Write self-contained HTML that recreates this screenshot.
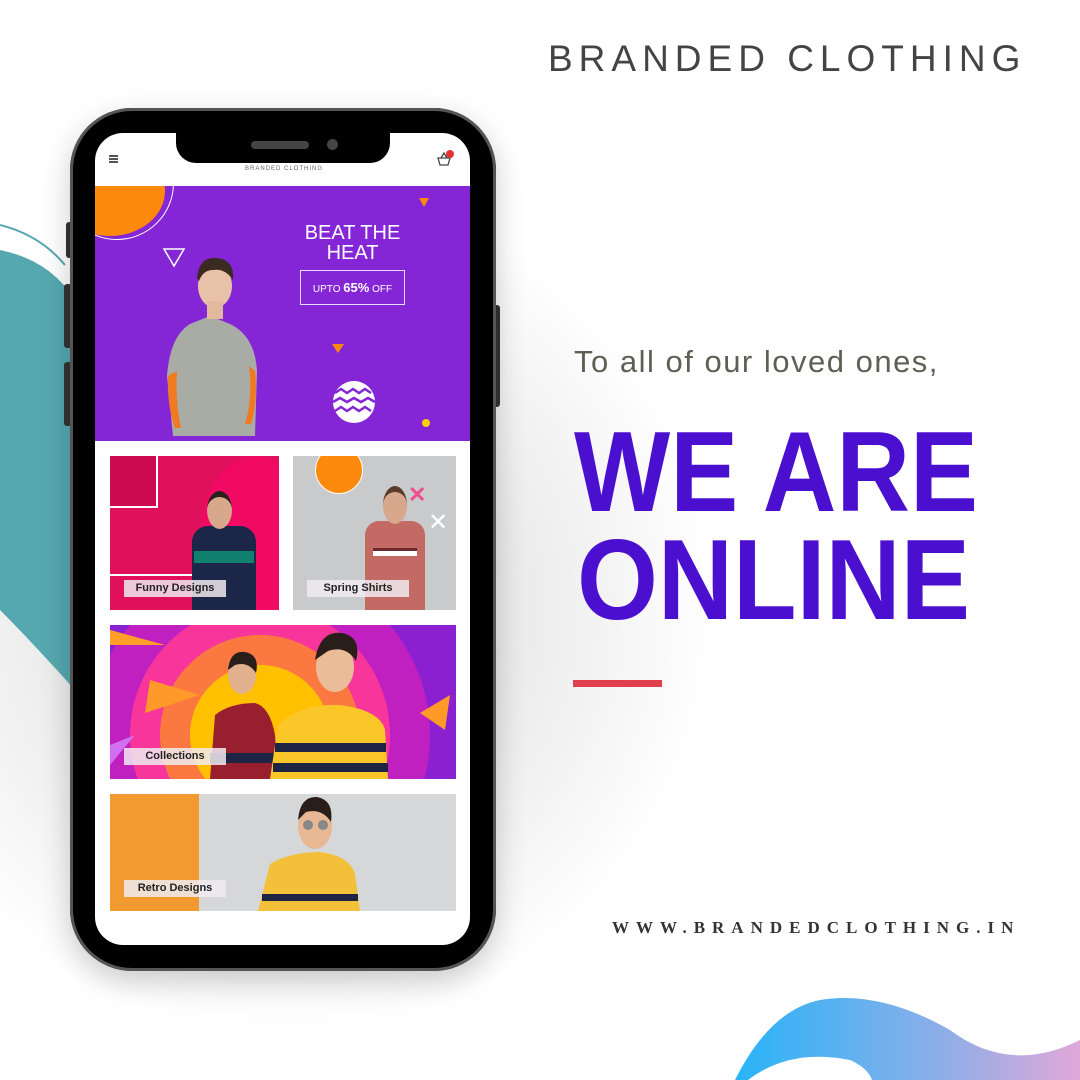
<!DOCTYPE html>
<html><head><meta charset="utf-8"><style>
html,body{margin:0;padding:0}
body{width:1080px;height:1080px;position:relative;overflow:hidden;background:#fff;font-family:"Liberation Sans",sans-serif}
.abs{position:absolute}
.lbl{position:absolute;background:rgba(240,235,240,.85);font:bold 11px "Liberation Sans",sans-serif;color:#222;text-align:center;height:17px;line-height:17px;width:102px}
</style></head><body>
<!-- background shading -->
<div class="abs" style="left:0;top:180px;width:720px;height:860px;background:radial-gradient(ellipse at 40% 50%,#d8d8d8 0%,#ececec 40%,rgba(255,255,255,0) 70%)"></div>
<!-- swooshes -->
<svg class="abs" style="left:0;top:0" width="1080" height="1080">
 <defs><linearGradient id="bl" x1="0" x2="1"><stop offset="0" stop-color="#27b4f8"/><stop offset=".6" stop-color="#8eaee8"/><stop offset="1" stop-color="#e0a8d8"/></linearGradient></defs>
 <path d="M0 250 Q50 260 75 300 L75 690 Q30 640 0 610 Z" fill="#56a8b0"/>
 <path d="M0 225 Q40 235 65 265" stroke="#56a8b0" stroke-width="2" fill="none"/>
 <path d="M735 1080 Q770 1010 820 1000 Q880 990 950 1030 Q1010 1075 1080 1040 L1080 1080 Z" fill="url(#bl)"/>
 <path d="M748 1080 Q790 1048 850 1060 Q868 1068 872 1080 Z" fill="#fff"/>
</svg>
<!-- logo -->
<div class="abs" style="left:548px;top:38px;font-size:37px;letter-spacing:6px;color:#444;white-space:nowrap">BRANDED CLOTHING</div>
<!-- right texts -->
<div class="abs" style="left:574px;top:344px;font-size:31px;color:#5f5f55;letter-spacing:1.5px;white-space:nowrap">To all of our loved ones,</div>
<svg class="abs" style="left:0;top:0" width="1080" height="1080">
 <text x="574" y="511" font-family="Liberation Sans" font-weight="bold" font-size="114" fill="#4b0fd0" textLength="404" lengthAdjust="spacingAndGlyphs">WE ARE</text>
 <text x="577" y="619" font-family="Liberation Sans" font-weight="bold" font-size="114" fill="#4b0fd0" textLength="393" lengthAdjust="spacingAndGlyphs">ONLINE</text>
</svg>
<div class="abs" style="left:573px;top:680px;width:89px;height:7px;background:#e0404e"></div>
<div class="abs" style="left:612px;top:918px;font:bold 17px 'Liberation Serif',serif;letter-spacing:7px;color:#333;white-space:nowrap">WWW.BRANDEDCLOTHING.IN</div>

<!-- phone -->
<div class="abs" style="left:66px;top:222px;width:6px;height:36px;background:#333;border-radius:3px"></div>
<div class="abs" style="left:64px;top:284px;width:8px;height:64px;background:#333;border-radius:3px"></div>
<div class="abs" style="left:64px;top:362px;width:8px;height:64px;background:#333;border-radius:3px"></div>
<div class="abs" style="left:493px;top:305px;width:7px;height:102px;background:#333;border-radius:3px"></div>
<div class="abs" style="left:70px;top:108px;width:426px;height:863px;border-radius:62px;background:#000;box-shadow:0 0 0 3px #555 inset,0 10px 30px rgba(0,0,0,.2)"></div>
<div class="abs" style="left:95px;top:133px;width:375px;height:812px;border-radius:28px;background:#fff;overflow:hidden">
 <div class="abs" style="left:14px;top:22px;width:9px;height:1.5px;background:#555;box-shadow:0 3px 0 #555,0 6px 0 #555"></div>
 <div class="abs" style="left:150px;top:33px;font-size:6px;letter-spacing:1px;color:#666">BRANDED CLOTHING</div>
 <svg class="abs" style="left:340px;top:16px" width="20" height="18"><path d="M3 9 H15 L13 16 H5 Z M6 9 L9 4 L12 9" stroke="#444" stroke-width="1.3" fill="none"/><circle cx="15" cy="5" r="4" fill="#e53030"/></svg>
 <div class="abs" style="left:0;top:53px;width:375px;height:255px;background:#8526d6;overflow:hidden">
  <div class="abs" style="left:-40px;top:-40px;width:110px;height:90px;border-radius:50%;background:#fd8a0c"></div>
  <div class="abs" style="left:-35px;top:-60px;width:112px;height:112px;border-radius:50%;border:1.5px solid #fff"></div>
  <svg class="abs" style="left:0;top:0" width="375" height="255">
   <path d="M69 63 L89 63 L79 80 Z" stroke="#fff" stroke-width="1.5" fill="none"/>
   <path d="M324 12 L334 12 L329 21 Z M237 158 L249 158 L243 167 Z" fill="#fd8a0c"/>
   <circle cx="331" cy="237" r="4" fill="#ffd000"/>
   <circle cx="259" cy="216" r="21" fill="#fff"/>
   <path d="M240 207 l6-4 6 4 6-4 6 4 6-4 6 4 M238 216 l7-4 7 4 7-4 7 4 7-4 7 4 M240 225 l6-4 6 4 6-4 6 4 6-4 6 4" stroke="#8526d6" stroke-width="2.5" fill="none"/>
   <path d="M78 250 L72 190 Q75 150 95 138 L115 130 L135 138 Q160 150 162 185 L160 250 Z" fill="#a9aca5"/>
   <path d="M73 190 Q72 220 80 242 L86 242 Q80 215 82 185 Z M160 185 Q163 215 156 238 L150 238 Q158 212 154 180 Z" fill="#f07a20"/>
   <ellipse cx="120" cy="100" rx="17" ry="22" fill="#e8c2a8"/>
   <path d="M102 92 Q104 70 122 72 Q140 74 138 94 Q130 82 118 84 Q108 84 104 95 Z" fill="#3a2a22"/>
   <rect x="112" y="115" width="16" height="18" fill="#e3b99e"/>
  </svg>
  <div class="abs" style="left:190px;top:37px;width:135px;text-align:center;color:#fff;font-size:20px;line-height:20px">BEAT THE<br>HEAT</div>
  <div class="abs" style="left:205px;top:84px;width:103px;height:33px;border:1px solid #e8dcff;color:#fff;font-size:10px;text-align:center;line-height:33px">UPTO <b style="font-size:13px">65%</b> OFF</div>
 </div>
 <div class="abs" style="left:15px;top:323px;width:169px;height:154px;background:#e0105a;overflow:hidden">
  <div class="abs" style="left:0;top:0;width:46px;height:50px;border:2px solid #fff;border-left:0;border-top:0;background:#cc0a4f"></div>
  <div class="abs" style="left:90px;top:0;width:110px;height:160px;border-radius:50%;background:#f00a64"></div>
  <div class="abs" style="left:0;top:118px;width:97px;height:40px;border:2px solid #fff;border-left:0;border-bottom:0"></div>
  <div class="abs" style="left:82px;top:70px;width:64px;height:90px;background:#1c2648;border-radius:16px 16px 0 0"></div>
  <div class="abs" style="left:84px;top:95px;width:60px;height:12px;background:#12806e"></div>
  <div class="abs" style="left:97px;top:35px;width:25px;height:32px;border-radius:50%;background:#d8a88c;border-top:6px solid #2a201c"></div>
  <div class="lbl" style="left:14px;top:124px">Funny Designs</div>
 </div>
 <div class="abs" style="left:198px;top:323px;width:163px;height:154px;background:#c8cacc;overflow:hidden">
  <div class="abs" style="left:22px;top:-10px;width:46px;height:46px;border-radius:50%;background:#fd8a0c;border:1px solid #fff"></div>
  <div class="abs" style="left:115px;top:26px;color:#f04e8e;font-size:22px;font-weight:bold">✕</div>
  <div class="abs" style="left:135px;top:52px;color:#fff;font-size:24px">✕</div>
  <div class="abs" style="left:72px;top:65px;width:60px;height:95px;background:#c46a64;border-radius:14px 14px 0 0"></div>
  <div class="abs" style="left:80px;top:92px;width:44px;height:5px;background:#fff;border-top:3px solid #6a2a30"></div>
  <div class="abs" style="left:90px;top:30px;width:24px;height:32px;border-radius:50%;background:#d8a88c;border-top:6px solid #5a3a28"></div>
  <div class="lbl" style="left:14px;top:124px">Spring Shirts</div>
 </div>
 <div class="abs" style="left:15px;top:492px;width:346px;height:154px;background:radial-gradient(circle at 150px 110px,#ffc000 0 70px,#fb7840 70px 100px,#f7359a 100px 130px,#c020c0 130px 170px,#8a20d0 170px);overflow:hidden">
  <svg class="abs" style="left:0;top:0" width="346" height="154">
   <path d="M40 55 L90 70 L35 88 Z" fill="#ff9a2a"/>
   <path d="M0 5 L55 20 L0 20 Z" fill="#ff9f2a"/>
   <path d="M340 70 L310 88 L335 105 Z" fill="#ff9a2a"/>
   <path d="M0 120 L25 110 L0 140 Z" fill="#d070f0"/>
   <path d="M100 154 L105 90 Q120 78 145 78 Q160 82 165 110 L168 154 Z" fill="#98202e"/>
   <path d="M100 128 H168 V138 H100 Z" fill="#1e2444"/>
   <path d="M160 154 L168 100 Q190 78 230 80 Q270 85 275 105 L278 154 Z" fill="#fbc628"/>
   <path d="M165 118 H276 V127 H165 Z M163 138 H278 V147 H163 Z" fill="#1e2444"/>
   <ellipse cx="132" cy="50" rx="14" ry="19" fill="#e2b08c"/>
   <path d="M118 45 Q120 25 135 27 Q150 30 146 48 Q138 36 125 40 Z" fill="#2a1e1a"/>
   <ellipse cx="225" cy="42" rx="19" ry="25" fill="#ebbc98"/>
   <path d="M205 35 Q210 5 232 8 Q252 12 246 36 Q236 20 218 26 Z" fill="#2a1e1a"/>
  </svg>
  <div class="lbl" style="left:14px;top:123px">Collections</div>
 </div>
 <div class="abs" style="left:15px;top:661px;width:346px;height:117px;background:#d5d7d8;overflow:hidden">
  <div class="abs" style="left:0;top:0;width:89px;height:117px;background:#f29a30"></div>
  <svg class="abs" style="left:0;top:0" width="346" height="117">
   <path d="M148 117 L160 70 Q180 58 210 58 Q240 62 245 80 L250 117 Z" fill="#f3c03a"/>
   <path d="M152 100 H248 V107 H152 Z" fill="#1e2444"/>
   <ellipse cx="205" cy="32" rx="17" ry="23" fill="#e8b894"/>
   <path d="M188 26 Q190 2 207 3 Q224 6 221 28 Q212 14 196 18 Z" fill="#2a1e1a"/>
   <circle cx="198" cy="31" r="5" fill="#888"/><circle cx="213" cy="31" r="5" fill="#888"/>
  </svg>
  <div class="lbl" style="left:14px;top:86px">Retro Designs</div>
 </div>
</div>
<div class="abs" style="left:176px;top:130px;width:214px;height:33px;background:#000;border-radius:0 0 20px 20px"></div>
<div class="abs" style="left:251px;top:141px;width:58px;height:8px;background:#444;border-radius:4px"></div>
<div class="abs" style="left:327px;top:139px;width:11px;height:11px;background:#444;border-radius:50%"></div>
</body></html>
